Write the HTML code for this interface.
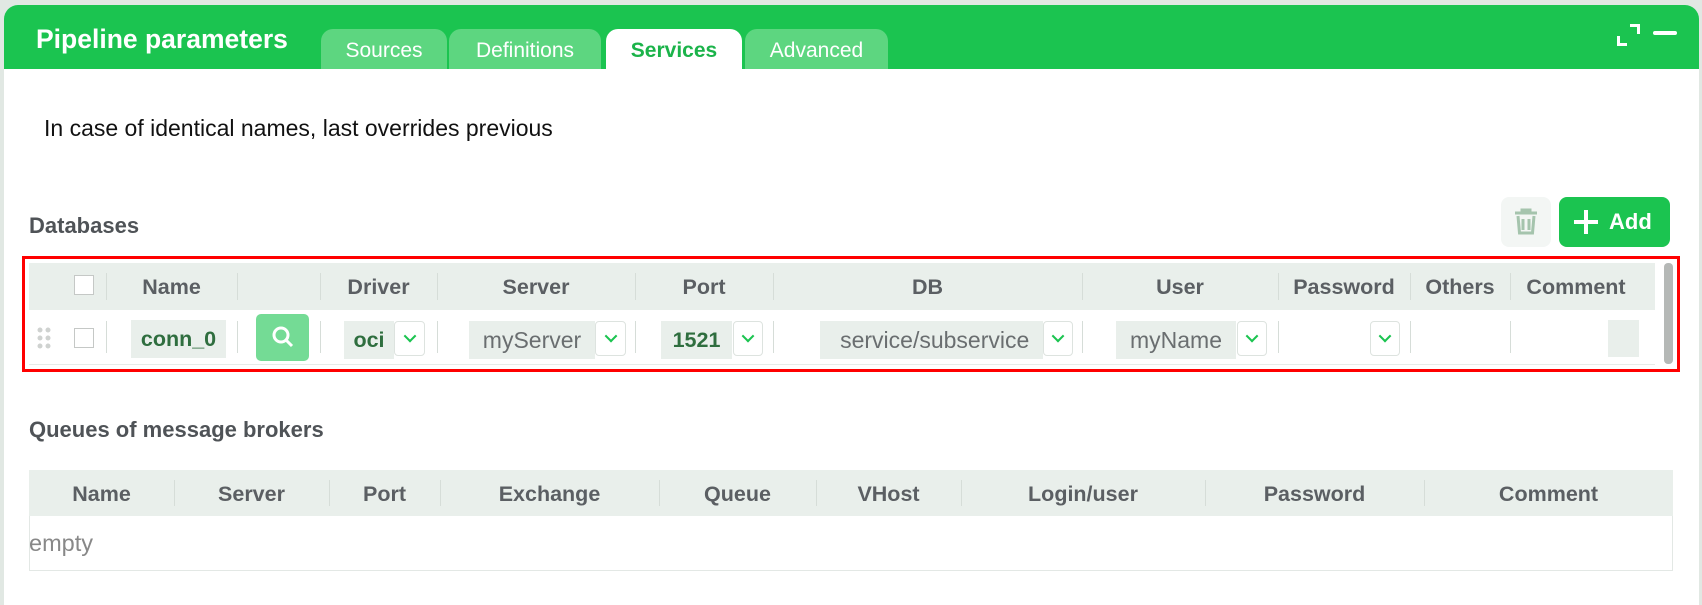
<!DOCTYPE html>
<html><head><meta charset="utf-8"><style>
*{box-sizing:border-box;margin:0;padding:0}
body{width:1702px;height:585px;background:#e1e8e3;font-family:"Liberation Sans",sans-serif;position:relative;overflow:hidden}
.a{position:absolute}
.panel{left:4px;top:5px;width:1695px;height:600px;background:#fff;border-radius:14px 14px 0 0;overflow:hidden}
.hdr{left:0;top:0;width:100%;height:64px;background:#1bc450}
.tab{top:24px;height:40px;background:#5dd680;color:#fff;font-size:21px;border-radius:12px 12px 0 0;text-align:center;line-height:44px}
.th{color:#5b5f63;font-weight:bold;font-size:21.5px;text-align:center;line-height:48px;white-space:nowrap}
.sep{width:1px;background:#d6ddd8}
.cell{background:#e9efeb;font-size:21.5px;line-height:38px;text-align:center;white-space:nowrap;overflow:hidden}
.chev{background:#fff;border:1px solid #dde3df;border-radius:4px}
.chev:after{content:"";position:absolute;left:50%;top:45%;width:7px;height:7px;border-right:2px solid #1bc450;border-bottom:2px solid #1bc450;transform:translate(-50%,-60%) rotate(45deg)}
.g{color:#2f6e3f;font-weight:bold}
.m{color:#6a6e70;font-size:23px}
</style></head><body>
<div class="a panel">
 <div class="a hdr"></div>
 <div class="a" style="left:32px;top:19px;color:#fff;font-weight:bold;font-size:26.5px">Pipeline parameters</div>
 <div class="a tab" style="left:317px;width:126px">Sources</div>
 <div class="a tab" style="left:445px;width:152px">Definitions</div>
 <div class="a tab" style="left:602px;width:136px;background:#fff;color:#1bb34a;font-weight:bold">Services</div>
 <div class="a tab" style="left:741px;width:143px">Advanced</div>
 <div class="a" style="left:1626px;top:19px;width:10px;height:10px;border-top:3px solid #fff;border-right:3px solid #fff"></div>
 <div class="a" style="left:1613px;top:31px;width:10px;height:10px;border-bottom:3px solid #fff;border-left:3px solid #fff"></div>
 <div class="a" style="left:1649px;top:26px;width:24px;height:4px;background:#fff;border-radius:2px"></div>
 <div class="a" style="left:40px;top:110px;font-size:23px;color:#111">In case of identical names, last overrides previous</div>
 <div class="a" style="left:25px;top:208px;font-size:22px;font-weight:bold;color:#4f5357">Databases</div>
 <div class="a" style="left:1497px;top:192px;width:50px;height:50px;background:#f3f6f4;border-radius:8px">
  <svg width="50" height="50" viewBox="0 0 50 50"><g fill="none" stroke="#a5c4ad" stroke-width="3"><path d="M14 16h22M21 16v-3h8v3M17 19l1.5 17h13L33 19"/><path d="M22 22v11M28 22v11"/></g></svg>
 </div>
 <div class="a" style="left:1555px;top:192px;width:111px;height:50px;background:#1bc450;border-radius:8px;color:#fff;font-weight:bold;font-size:22px;line-height:50px">
  <span class="a" style="left:15px;top:13px;width:24px;height:24px"><span class="a" style="left:10px;top:0;width:4px;height:24px;background:#fff"></span><span class="a" style="left:0;top:10px;width:24px;height:4px;background:#fff"></span></span>
  <span class="a" style="left:50px">Add</span>
 </div>
</div>
<div class="a" style="left:22px;top:256px;width:1658px;height:116px;border:3px solid #f00"></div>
<div class="a" style="left:29px;top:263px;width:1626px;height:47px;background:#e9efeb"></div>
<div class="a" style="left:1664px;top:263px;width:9px;height:101px;background:#b5b8b6;border-radius:4px"></div>
<div class="a" style="left:74px;top:275px;width:20px;height:20px;border:1px solid #c5c8c6;background:#fff"></div>
<div class="a th" style="left:106px;top:263px;width:131px">Name</div>
<div class="a th" style="left:320px;top:263px;width:117px">Driver</div>
<div class="a th" style="left:437px;top:263px;width:198px">Server</div>
<div class="a th" style="left:635px;top:263px;width:138px">Port</div>
<div class="a th" style="left:773px;top:263px;width:309px">DB</div>
<div class="a th" style="left:1082px;top:263px;width:196px">User</div>
<div class="a th" style="left:1278px;top:263px;width:132px">Password</div>
<div class="a th" style="left:1410px;top:263px;width:100px">Others</div>
<div class="a th" style="left:1510px;top:263px;width:132px">Comment</div>
<div class="a sep" style="left:106px;top:273px;height:27px"></div>
<div class="a sep" style="left:237px;top:273px;height:27px"></div>
<div class="a sep" style="left:320px;top:273px;height:27px"></div>
<div class="a sep" style="left:437px;top:273px;height:27px"></div>
<div class="a sep" style="left:635px;top:273px;height:27px"></div>
<div class="a sep" style="left:773px;top:273px;height:27px"></div>
<div class="a sep" style="left:1082px;top:273px;height:27px"></div>
<div class="a sep" style="left:1278px;top:273px;height:27px"></div>
<div class="a sep" style="left:1410px;top:273px;height:27px"></div>
<div class="a sep" style="left:1510px;top:273px;height:27px"></div>
<div class="a" style="left:29px;top:364px;width:1626px;height:1px;background:#e6ebe8"></div>
<svg class="a" style="left:37px;top:327px" width="16" height="22"><g fill="#cfd2d0"><circle cx="3" cy="3" r="2.5"/><circle cx="11" cy="3" r="2.5"/><circle cx="3" cy="11" r="2.5"/><circle cx="11" cy="11" r="2.5"/><circle cx="3" cy="19" r="2.5"/><circle cx="11" cy="19" r="2.5"/></g></svg>
<div class="a" style="left:74px;top:328px;width:20px;height:20px;border:1px solid #c5c8c6;background:#fff"></div>
<div class="a sep" style="left:106px;top:321px;height:32px"></div>
<div class="a sep" style="left:237px;top:321px;height:32px"></div>
<div class="a sep" style="left:320px;top:321px;height:32px"></div>
<div class="a sep" style="left:437px;top:321px;height:32px"></div>
<div class="a sep" style="left:635px;top:321px;height:32px"></div>
<div class="a sep" style="left:773px;top:321px;height:32px"></div>
<div class="a sep" style="left:1082px;top:321px;height:32px"></div>
<div class="a sep" style="left:1278px;top:321px;height:32px"></div>
<div class="a sep" style="left:1410px;top:321px;height:32px"></div>
<div class="a sep" style="left:1510px;top:321px;height:32px"></div>
<div class="a cell g" style="left:131px;top:320px;width:95px">conn_0</div>
<div class="a" style="left:256px;top:314px;width:53px;height:47px;background:#74db95;border-radius:5px">
 <svg width="53" height="47"><g fill="none" stroke="#fff" stroke-width="3"><circle cx="25" cy="21" r="7"/><path d="M30 26l6 6"/></g></svg>
</div>
<div class="a cell g" style="left:344px;top:321px;width:50px">oci</div>
<div class="a chev" style="left:394px;top:321px;width:31px;height:35px"></div>
<div class="a cell m" style="left:469px;top:321px;width:126px">myServer</div>
<div class="a chev" style="left:595px;top:321px;width:31px;height:35px"></div>
<div class="a cell g" style="left:661px;top:321px;width:71px">1521</div>
<div class="a chev" style="left:733px;top:321px;width:30px;height:35px"></div>
<div class="a cell m" style="left:820px;top:321px;width:223px">&nbsp;service/subservice</div>
<div class="a chev" style="left:1043px;top:321px;width:30px;height:35px"></div>
<div class="a cell m" style="left:1116px;top:321px;width:120px">myName</div>
<div class="a chev" style="left:1237px;top:321px;width:30px;height:35px"></div>
<div class="a cell" style="left:1337px;top:321px;width:33px"></div>
<div class="a chev" style="left:1370px;top:321px;width:30px;height:35px"></div>
<div class="a cell" style="left:1608px;top:320px;width:31px;height:37px"></div>
<div class="a" style="left:29px;top:417px;font-size:22px;font-weight:bold;color:#4f5357">Queues of message brokers</div>
<div class="a" style="left:29px;top:470px;width:1644px;height:101px;border:1px solid #e3e8e5"></div>
<div class="a" style="left:29px;top:470px;width:1644px;height:46px;background:#e9efeb"></div>
<div class="a th" style="left:29px;top:470px;width:145px">Name</div>
<div class="a th" style="left:174px;top:470px;width:155px">Server</div>
<div class="a th" style="left:329px;top:470px;width:111px">Port</div>
<div class="a th" style="left:440px;top:470px;width:219px">Exchange</div>
<div class="a th" style="left:659px;top:470px;width:157px">Queue</div>
<div class="a th" style="left:816px;top:470px;width:145px">VHost</div>
<div class="a th" style="left:961px;top:470px;width:244px">Login/user</div>
<div class="a th" style="left:1205px;top:470px;width:219px">Password</div>
<div class="a th" style="left:1424px;top:470px;width:249px">Comment</div>
<div class="a sep" style="left:174px;top:480px;height:26px"></div>
<div class="a sep" style="left:329px;top:480px;height:26px"></div>
<div class="a sep" style="left:440px;top:480px;height:26px"></div>
<div class="a sep" style="left:659px;top:480px;height:26px"></div>
<div class="a sep" style="left:816px;top:480px;height:26px"></div>
<div class="a sep" style="left:961px;top:480px;height:26px"></div>
<div class="a sep" style="left:1205px;top:480px;height:26px"></div>
<div class="a sep" style="left:1424px;top:480px;height:26px"></div>
<div class="a" style="left:29px;top:530px;font-size:23.5px;color:#888">empty</div>
</body></html>
